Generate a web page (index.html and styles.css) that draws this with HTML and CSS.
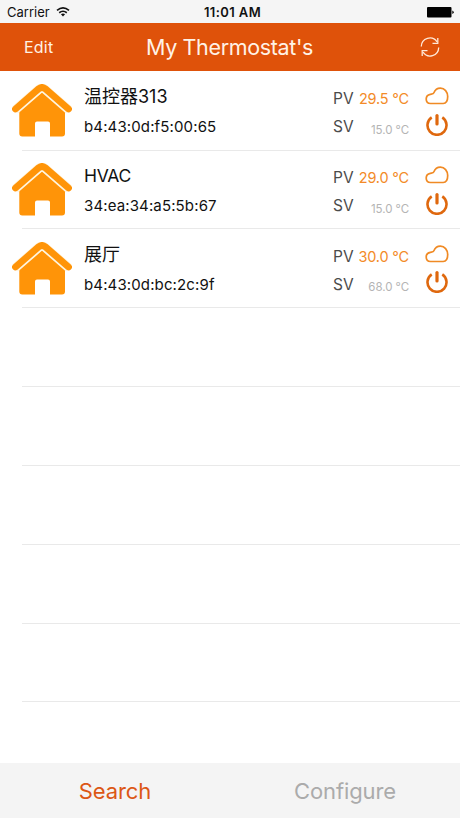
FILE: index.html
```html
<!DOCTYPE html>
<html lang="en">
<head>
<meta charset="utf-8">
<title>My Thermostat's</title>
<link rel="stylesheet" href="styles.css">
</head>
<body>
<svg class="symbols" aria-hidden="true">
  <symbol id="house" viewBox="0 0 60 53">
    <path d="M7.300 27 30 8 53 27V49.500a3 3 0 0 1-3 3H38V39.500a2 2 0 0 0-2-2H25a2 2 0 0 0-2 2v13H10.300a3 3 0 0 1-3-3Z" fill="#ff9408"/>
    <path d="M3 26 26.600 5.600Q30 2.600 33.400 5.600L57 26" fill="none" stroke="#fff5df" stroke-width="9.200"/>
    <path d="M3.500 25 26.800 4.700Q30 2.200 33.200 4.700L56.500 25" fill="none" stroke="#ff9408" stroke-width="6.800" stroke-linecap="round"/>
  </symbol>
  <symbol id="cloud" viewBox="0 0 24 18">
    <path d="M5.500 16.500H18.200C21 16.500 22.700 13.600 22.700 9.600 22.700 4.800 19.600 1.200 15.400 1.200 12.200 1.200 10 3 8.900 5.800 8.300 7.300 7 7 5.300 7.300 2.800 7.700 1.200 9.600 1.200 12 1.200 14.700 3 16.500 5.500 16.500Z" fill="none" stroke="#f08a24" stroke-width="1.700"/>
  </symbol>
  <symbol id="power" viewBox="0 0 22 22">
    <path d="M5.700 3.400A9.500 9.500 0 1 0 16.300 3.400" fill="none" stroke="#df680e" stroke-width="2.600"/>
    <path d="M11 1.600V10" stroke="#df680e" stroke-width="3.200" stroke-linecap="round"/>
  </symbol>
</svg>
<main class="screen">
  <div class="status">
    <div class="carrier"><span>Carrier</span>
      <svg class="wifi" viewBox="0 0 14 10"><path d="M1 3.300Q7-1.400 13 3.300M3.200 5.700Q7 2.800 10.800 5.700" fill="none" stroke="#111" stroke-width="1.700"/><path d="M4.900 7.300Q7 5.700 9.100 7.300L7 9.600Z" fill="#111"/></svg>
    </div>
    <time class="clock">11:01 AM</time>
    <svg class="battery" viewBox="0 0 27 11"><rect width="24.500" height="10.500" rx="1" fill="#000"/><path d="M25.300 3.500Q26.700 4 26.700 5.200T25.300 7Z" fill="#000"/></svg>
  </div>
  <header class="nav">
    <span class="edit">Edit</span>
    <h1 class="title">My Thermostat's</h1>
    <svg class="refresh" viewBox="0 0 20 20" fill="none" stroke="#ffe9d8" stroke-width="1.300"><path d="M1.300 9.500A8.600 8.600 0 0 1 17 4.800M18.700 10.500A8.600 8.600 0 0 1 3 15.200"/><path d="M17.800 1V6.300H12.500M2.200 19V13.700H7.500"/></svg>
  </header>
  <ul class="list">
    <li class="row">
      <svg class="house"><use href="#house"/></svg>
      <div class="device"><span class="name">温控器313</span><span class="mac">b4:43:0d:f5:00:65</span></div>
      <div class="readings"><span class="label">PV</span><span class="pv">29.5 °C</span><span class="label">SV</span><span class="sv">15.0 °C</span></div>
      <div class="state"><svg class="cloud"><use href="#cloud"/></svg><svg class="power"><use href="#power"/></svg></div>
    </li>
    <li class="row">
      <svg class="house"><use href="#house"/></svg>
      <div class="device"><span class="name latin">HVAC</span><span class="mac">34:ea:34:a5:5b:67</span></div>
      <div class="readings"><span class="label">PV</span><span class="pv">29.0 °C</span><span class="label">SV</span><span class="sv">15.0 °C</span></div>
      <div class="state"><svg class="cloud"><use href="#cloud"/></svg><svg class="power"><use href="#power"/></svg></div>
    </li>
    <li class="row">
      <svg class="house"><use href="#house"/></svg>
      <div class="device"><span class="name">展厅</span><span class="mac">b4:43:0d:bc:2c:9f</span></div>
      <div class="readings"><span class="label">PV</span><span class="pv">30.0 °C</span><span class="label">SV</span><span class="sv">68.0 °C</span></div>
      <div class="state"><svg class="cloud"><use href="#cloud"/></svg><svg class="power"><use href="#power"/></svg></div>
    </li>
    <li class="row"></li>
    <li class="row"></li>
    <li class="row"></li>
    <li class="row"></li>
    <li class="row"></li>
  </ul>
  <nav class="tabs"><span class="tab active">Search</span><span class="tab">Configure</span></nav>
</main>
</body>
</html>
```
FILE: styles.css
```css
* { box-sizing: border-box; }
body { margin: 0; font-family: Inter, "Noto Sans CJK SC", sans-serif; color: #111; background: #fff; }
svg { display: block; flex: none; }
.symbols { position: absolute; width: 0; height: 0; }
.screen { width: 460px; height: 818px; display: flex; flex-direction: column; overflow: hidden; white-space: nowrap; }
.status { height: 23px; flex: none; display: grid; grid-template-columns: 1fr auto 1fr; align-items: center; padding: 1px 6px 0 7px; background: #f5f5f5; font-size: 13px; }
.carrier { display: flex; align-items: center; gap: 6px; }
.wifi { width: 14px; height: 10px; }
.clock { font-weight: 600; font-size: 13px; letter-spacing: 0.400px; padding-left: 4px; }
.battery { width: 27px; height: 11px; justify-self: end; }
.nav { height: 48px; flex: none; display: grid; grid-template-columns: 1fr auto 1fr; align-items: center; padding: 0 20px 0 24px; background: #df520a; color: #fff2e6; }
.edit { font-size: 16px; letter-spacing: 0.200px; }
.title { margin: 0 5px 0 0; font-size: 21.500px; font-weight: 400; letter-spacing: -0.350px; }
.refresh { width: 20px; height: 20px; justify-self: end; }
.list { flex: 1; margin: 0; padding: 0.700px 0 0; list-style: none; }
.row { height: 78.850px; display: flex; padding: 0 11px 0 12px; background: linear-gradient(#e9e9e9, #e9e9e9) 22px 100% / 100% 1px no-repeat; }
.house { width: 60px; height: 53px; margin-top: 12.600px; }
.device { flex: 1; display: flex; flex-direction: column; padding: 13.700px 0 0 12px; }
.name { height: 24px; line-height: 24px; font-size: 18px; }
.latin { font-size: 17.500px; letter-spacing: -0.300px; }
.mac { margin-top: 5.500px; height: 24px; line-height: 24px; font-size: 15px; letter-spacing: 0.130px; }
.readings { width: 76px; display: grid; grid-template-columns: auto 1fr; grid-template-rows: 28px 28px; align-content: start; align-items: center; padding-top: 13px; }
.label { font-size: 15.500px; color: #4b4b4b; }
.pv, .sv { text-align: right; }
.pv { font-size: 14.500px; letter-spacing: -0.180px; color: #f38b28; }
.sv { font-size: 11.500px; letter-spacing: -0.050px; color: #b4b4b4; padding-top: 6px; }
.state { width: 24px; margin-left: 16px; display: flex; flex-direction: column; align-items: center; padding-top: 15.500px; gap: 8.500px; }
.cloud { width: 24px; height: 18px; }
.power { width: 22px; height: 22px; }
.tabs { height: 55px; flex: none; display: grid; grid-template-columns: 1fr 1fr; align-items: center; background: #f4f4f4; }
.tab { text-align: center; font-size: 22px; letter-spacing: -0.120px; color: #ababab; }
.active { color: #dc5715; }
```
